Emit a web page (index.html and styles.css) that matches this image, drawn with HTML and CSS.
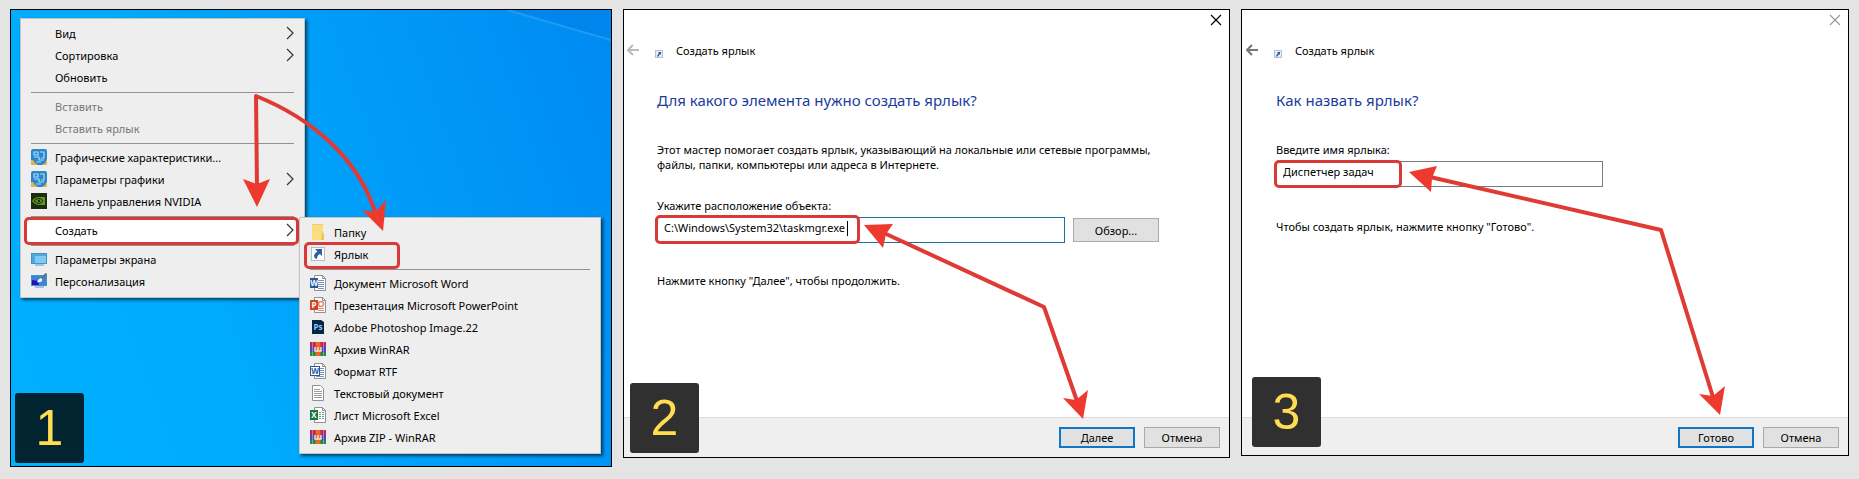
FILE: index.html
```html
<!DOCTYPE html>
<html lang="ru">

<head>
    <meta charset="UTF-8">
    <meta name="viewport" content="width=device-width, initial-scale=1.0">
    <title>Создать ярлык</title>
    <link rel="stylesheet" href="styles.css">
</head>

<body>
    <!-- Shared icons -->
    <svg class="sprite" aria-hidden="true">
        <symbol id="i-intel" viewBox="0 0 16 16">
            <rect width="16" height="16" rx="2" fill="#2a86c8"/>
            <path d="M0 11v3q0 2 2 2h5l-3-2-2-3zM16 10v4q0 2-2 2h-3l3-2z" fill="#e3b64a"/>
            <path d="M3 3h4v3H3zM9 3h4v6h-3M3 8h5v3h5M5 13h5" fill="none" stroke="#a9dcf7" stroke-width="1.2"/>
        </symbol>
        <symbol id="i-nvidia" viewBox="0 0 16 16">
            <rect width="16" height="16" fill="#1d2a14"/>
            <path d="M1 8q3-4 7-4h6v8H8q-4 0-7-4z" fill="#5f9a14"/>
            <path d="M3 8q2-2.500 5-2.500T12 8q-1.500 2.500-4 2.500T3 8z" fill="none" stroke="#1d2a14"/>
            <circle cx="8" cy="8" r="1.300" fill="#1d2a14"/>
        </symbol>
        <symbol id="i-screen" viewBox="0 0 16 16">
            <rect x=".5" y="2.500" width="15" height="10" fill="#7fcbf5" stroke="#4a8fc6"/>
            <path d="M1 3h14v2H4v7H1z" fill="#4fa6e0"/>
            <path d="M4 14h9" stroke="#8ab4d4" stroke-width="1.500"/>
        </symbol>
        <symbol id="i-personal" viewBox="0 0 16 16">
            <rect x=".5" y="2.500" width="15" height="10" fill="#3d84d8" stroke="#4a8fc6"/>
            <path d="M1 7l6 1 1 4H1z" fill="#2414b8"/>
            <path d="M15.500.5L10 6" stroke="#5b7382" stroke-width="2"/>
            <path d="M10 5q2 1 1 3-2 2-5 1 1-3 4-4z" fill="#f1f5fa"/>
            <path d="M4 14h9" stroke="#8ab4d4" stroke-width="1.500"/>
        </symbol>
        <symbol id="i-folder" viewBox="0 0 16 16">
            <path d="M2 0h11v16H2z" fill="#f9dd7f"/>
            <path d="M12 7l2 3v6h-3z" fill="#eac65a"/>
            <path d="M2 .5h11" stroke="#edcf73"/>
        </symbol>
        <symbol id="i-shortcut" viewBox="0 0 16 16">
            <rect x="1.500" y="1.500" width="13" height="13" fill="#fff" stroke="#b5bcc5"/>
            <path d="M5 3h7v7l-2-2q-3 1-3 5Q4 12 4 9.500 5 6.500 7.500 5.500z" fill="#2b5f9e"/>
        </symbol>
        <symbol id="i-page" viewBox="0 0 16 16">
            <path d="M4.500.5h8l3 3v12h-11z" fill="#fff" stroke="#8f9194"/>
            <path d="M12.500.5v3h3" fill="none" stroke="#8f9194"/>
        </symbol>
        <symbol id="i-word" viewBox="0 0 16 16">
            <use href="#i-page"/>
            <path d="M8 5.500h6M8 7.500h6M8 9.500h6M8 11.500h6M8 13.500h6" stroke="#6f93c2"/>
            <rect y="3" width="8" height="10" fill="#2b579a"/>
            <text x="4" y="11" class="glyph" fill="#fff">W</text>
        </symbol>
        <symbol id="i-ppt" viewBox="0 0 16 16">
            <use href="#i-page"/>
            <circle cx="11" cy="7" r="2.500" fill="none" stroke="#e08a72" stroke-width="1.500"/>
            <path d="M8 11.500h6M8 13.500h6" stroke="#e08a72"/>
            <rect y="3" width="8" height="10" fill="#d04525"/>
            <text x="4" y="11" class="glyph" fill="#fff">P</text>
        </symbol>
        <symbol id="i-ps" viewBox="0 0 16 16">
            <path d="M2 1h9l3 2v12H2z" fill="#06264a"/>
            <text x="8" y="11" class="glyph" fill="#8ccdf8">Ps</text>
        </symbol>
        <symbol id="i-rar" viewBox="0 0 16 16">
            <rect y="1" width="16" height="5" fill="#b8265e"/>
            <rect y="6" width="16" height="5" fill="#4a49b5"/>
            <rect y="11" width="16" height="4" fill="#1f8a45"/>
            <path d="M5.500 1h5v14h-5z" fill="#e9662c"/>
            <path d="M5 6v4h6V6M8 6v3" fill="none" stroke="#f5ecd9" stroke-width="1.400"/>
            <path d="M2.500 1v14M13.500 1v14" stroke="#fff" stroke-opacity=".35"/>
        </symbol>
        <symbol id="i-rtf" viewBox="0 0 16 16">
            <use href="#i-page"/>
            <path d="M10 5.500h4M10 7.500h4M10 9.500h4M10 11.500h4M6 13.500h8" stroke="#6f93c2"/>
            <rect x=".5" y="3.500" width="9" height="9" fill="#fff" stroke="#2b579a"/>
            <text x="5" y="11" class="glyph" fill="#2b579a">W</text>
        </symbol>
        <symbol id="i-text" viewBox="0 0 16 16">
            <path d="M2.500.5h8l3 3v12h-11z" fill="#fff" stroke="#8f9194"/>
            <path d="M4 4.500h6M4 6.500h8M4 8.500h8M4 10.500h8M4 12.500h8" stroke="#9b9da0"/>
        </symbol>
        <symbol id="i-excel" viewBox="0 0 16 16">
            <use href="#i-page"/>
            <path d="M9 5.500h2M12 5.500h2M9 7.500h2M12 7.500h2M9 9.500h2M12 9.500h2M9 11.500h2M12 11.500h2" stroke="#5ba37c"/>
            <rect y="3" width="8" height="10" fill="#1e7145"/>
            <text x="4" y="11" class="glyph" fill="#fff">X</text>
        </symbol>
        <symbol id="i-chevron" viewBox="0 0 8 14">
            <path d="M1 1l6 6-6 6" fill="none" stroke="#333" stroke-width="1.200"/>
        </symbol>
        <symbol id="i-back" viewBox="0 0 12 12">
            <path d="M12 6H1M6 1L1 6l5 5" fill="none" stroke="currentColor" stroke-width="2"/>
        </symbol>
        <symbol id="i-close" viewBox="0 0 12 12">
            <path d="M1 1l10 10M11 1L1 11" fill="none" stroke="currentColor" stroke-width="1.200"/>
        </symbol>
        <symbol id="i-link" viewBox="0 0 8 8">
            <rect x=".5" y=".5" width="7" height="7" fill="#e6edf6" stroke="#b4c1d4"/>
            <path d="M3 2h3v3L5 4 3 7 2 6l2-3z" fill="#2f5596"/>
        </symbol>
    </svg>

    <main class="steps">
        <!-- Step 1: desktop with context menus -->
        <section class="panel desktop">
            <svg class="ray" viewBox="0 0 110 32" aria-hidden="true">
                <path d="M6 0l104 31V0z" fill="#0078e4" fill-opacity=".35"/>
                <path d="M6 0l104 30" stroke="#3fb0fa" stroke-opacity=".5" stroke-width="2"/>
            </svg>
            <ul class="menu">
                <li><button class="item">Вид<svg class="chevron"><use href="#i-chevron"/></svg></button></li>
                <li><button class="item">Сортировка<svg class="chevron"><use href="#i-chevron"/></svg></button></li>
                <li><button class="item">Обновить</button></li>
                <li class="separator"></li>
                <li><button class="item" disabled>Вставить</button></li>
                <li><button class="item" disabled>Вставить ярлык</button></li>
                <li class="separator"></li>
                <li><button class="item"><svg class="icon"><use href="#i-intel"/></svg>Графические характеристики...</button></li>
                <li><button class="item"><svg class="icon"><use href="#i-intel"/></svg>Параметры графики<svg class="chevron"><use href="#i-chevron"/></svg></button></li>
                <li><button class="item"><svg class="icon"><use href="#i-nvidia"/></svg>Панель управления NVIDIA</button></li>
                <li class="separator"></li>
                <li><button class="item marked">Создать<svg class="chevron"><use href="#i-chevron"/></svg></button></li>
                <li class="separator"></li>
                <li><button class="item"><svg class="icon"><use href="#i-screen"/></svg>Параметры экрана</button></li>
                <li><button class="item"><svg class="icon"><use href="#i-personal"/></svg>Персонализация</button></li>
            </ul>

            <ul class="menu submenu">
                <li><button class="item"><svg class="icon"><use href="#i-folder"/></svg>Папку</button></li>
                <li><button class="item marked-short"><svg class="icon"><use href="#i-shortcut"/></svg>Ярлык</button></li>
                <li class="separator"></li>
                <li><button class="item"><svg class="icon"><use href="#i-word"/></svg>Документ Microsoft Word</button></li>
                <li><button class="item"><svg class="icon"><use href="#i-ppt"/></svg>Презентация Microsoft PowerPoint</button></li>
                <li><button class="item"><svg class="icon"><use href="#i-ps"/></svg>Adobe Photoshop Image.22</button></li>
                <li><button class="item"><svg class="icon"><use href="#i-rar"/></svg>Архив WinRAR</button></li>
                <li><button class="item"><svg class="icon"><use href="#i-rtf"/></svg>Формат RTF</button></li>
                <li><button class="item"><svg class="icon"><use href="#i-text"/></svg>Текстовый документ</button></li>
                <li><button class="item"><svg class="icon"><use href="#i-excel"/></svg>Лист Microsoft Excel</button></li>
                <li><button class="item"><svg class="icon"><use href="#i-rar"/></svg>Архив ZIP - WinRAR</button></li>
            </ul>

            <svg class="arrows" aria-hidden="true">
                <path class="shaft" d="M246 178L245 86C300 108 347 148 364 202"/>
                <path class="head" d="M232 169l14 5 13-5-13 28zM351 200l13 2 11-12-3 31z"/>
            </svg>
            <div class="badge">1</div>
        </section>

        <!-- Step 2: location of the object -->
        <section class="panel wizard">
            <div class="titlebar">
                <button class="close" aria-label="Закрыть"><svg><use href="#i-close"/></svg></button>
            </div>
            <header class="wizard-header">
                <button class="back" aria-label="Назад" disabled><svg><use href="#i-back"/></svg></button>
                <svg class="link-icon"><use href="#i-link"/></svg>
                <span>Создать ярлык</span>
            </header>
            <div class="wizard-body">
                <h1>Для какого элемента нужно создать ярлык?</h1>
                <p class="intro">Этот мастер помогает создать ярлык, указывающий на локальные или сетевые программы,<br>файлы, папки, компьютеры или адреса в Интернете.</p>
                <label for="location">Укажите расположение объекта:</label>
                <div class="field-row">
                    <div class="field frame-wide">
                        <input type="text" id="location" class="active" value="C:\Windows\System32\taskmgr.exe">
                    </div>
                    <button class="btn browse">Обзор...</button>
                </div>
                <p class="hint">Нажмите кнопку "Далее", чтобы продолжить.</p>
            </div>
            <footer class="wizard-footer">
                <button class="btn primary">Далее</button>
                <button class="btn">Отмена</button>
            </footer>
            <svg class="arrows" aria-hidden="true">
                <path class="shaft" d="M260 223l160 74 33 94"/>
                <path class="head" d="M240 215l29-1-7 10-3 14zM439 388l13 2 12-10-5 29z"/>
            </svg>
            <div class="badge">2</div>
        </section>

        <!-- Step 3: name of the shortcut -->
        <section class="panel wizard last">
            <div class="titlebar">
                <button class="close" aria-label="Закрыть"><svg><use href="#i-close"/></svg></button>
            </div>
            <header class="wizard-header">
                <button class="back" aria-label="Назад"><svg><use href="#i-back"/></svg></button>
                <svg class="link-icon"><use href="#i-link"/></svg>
                <span>Создать ярлык</span>
            </header>
            <div class="wizard-body">
                <h1>Как назвать ярлык?</h1>
                <label for="name">Введите имя ярлыка:</label>
                <div class="field-row">
                    <div class="field frame-narrow">
                        <input type="text" id="name" value="Диспетчер задач">
                    </div>
                </div>
                <p class="hint">Чтобы создать ярлык, нажмите кнопку "Готово".</p>
            </div>
            <footer class="wizard-footer">
                <button class="btn primary">Готово</button>
                <button class="btn">Отмена</button>
            </footer>
            <svg class="arrows" aria-hidden="true">
                <path class="shaft" d="M188 167l231 53 52 167"/>
                <path class="head" d="M167 162l28-6-5 12-1 14zM457 384l14 2 12-10-5 29z"/>
            </svg>
            <div class="badge">3</div>
        </section>
    </main>
</body>

</html>
```

FILE: styles.css
```css
/* Reset */
*,
*::before,
*::after {
    margin: 0;
    padding: 0;
    box-sizing: border-box;
}

body {
    background: #e4e4e4;
    font-family: "Noto Sans", "Open Sans", sans-serif;
    font-size: 11px;
    line-height: 15px;
    color: #000;
}

button,
input {
    font: inherit;
    color: inherit;
}

.sprite {
    display: none;
}

.glyph {
    font: bold 8px "Open Sans", sans-serif;
    text-anchor: middle;
}

/* Three panels in a row */
.steps {
    display: grid;
    grid-template-columns: minmax(0, 602fr) minmax(0, 607fr) minmax(0, 608fr);
    gap: 11px;
    align-items: start;
    padding: 9px 10px;
}

.panel {
    position: relative;
    border: 1px solid #000;
}

/* Desktop */
.desktop {
    min-height: 458px;
    padding: 8px 9px;
    background: linear-gradient(70deg, #00b0ff 0%, #00aafd 35%, #0098f7 70%, #008af1 100%);
}

.ray {
    position: absolute;
    top: 0;
    right: 0;
    width: 110px;
    height: 32px;
}

/* Context menu */
.menu {
    width: 285px;
    padding: 4px 10px;
    background: #eee;
    border: 1px solid #c4c4c4;
    box-shadow: 2px 2px 3px rgba(0, 0, 0, 0.6);
    list-style: none;
}

.submenu {
    position: absolute;
    top: 207px;
    left: 288px;
    width: 302px;
}

.item {
    position: relative;
    display: flex;
    align-items: center;
    width: 100%;
    height: 22px;
    padding: 0 0 2px 24px;
    background: none;
    border: 0;
    text-align: left;
}

.item:disabled {
    color: #777;
}

.icon {
    width: 16px;
    height: 16px;
    margin-left: -24px;
    margin-right: 8px;
}

.chevron {
    width: 8px;
    height: 14px;
    margin-left: auto;
}

.separator {
    height: 7px;
    padding-top: 3px;
}

.separator::before {
    content: "";
    display: block;
    height: 1px;
    background: #919191;
}

/* Red frames */
.marked::before,
.marked-short::before,
.frame-wide::after,
.frame-narrow::after {
    content: "";
    position: absolute;
    border: 3px solid #d93a37;
    border-radius: 5px;
}

.marked {
    z-index: 0;
}

.marked::before {
    z-index: -1;
    inset: -3px -5px -3px -7px;
    background: #fff;
}

.marked-short::before {
    top: -2px;
    left: -6px;
    width: 96px;
    height: 27px;
}

.frame-wide::after {
    top: -2px;
    left: -2px;
    width: 205px;
    height: 29px;
}

.frame-narrow::after {
    top: -1px;
    left: -2px;
    width: 128px;
    height: 28px;
}

/* Text cursor */
.frame-wide::before {
    content: "";
    position: absolute;
    top: 4px;
    left: 190px;
    width: 1px;
    height: 15px;
    background: #000;
}

/* Wizard window */
.wizard {
    display: flex;
    flex-direction: column;
    min-height: 449px;
    background: #fff;
}

.last {
    min-height: 447px;
}

.titlebar {
    display: flex;
    justify-content: flex-end;
    padding: 4px 7px 0;
    height: 31px;
}

.close,
.back {
    display: block;
    width: 12px;
    height: 12px;
    background: none;
    border: 0;
}

.close svg,
.back svg {
    display: block;
    width: 12px;
    height: 12px;
}

.last .close {
    color: #999;
}

.wizard-header {
    display: flex;
    align-items: center;
    height: 20px;
    padding: 0 0 2px 3px;
}

.last .wizard-header {
    padding-left: 4px;
}

.back {
    color: #777;
}

.back:disabled {
    color: #bbb;
}

.link-icon {
    width: 8px;
    height: 8px;
    margin: 8px 13px 0 16px;
}

.wizard-body {
    flex: 1;
    padding: 29px 50px 0 33px;
}

.last .wizard-body {
    padding-left: 34px;
}

h1 {
    margin-bottom: 32px;
    font-size: 15px;
    font-weight: normal;
    line-height: 20px;
    color: #1a3d9c;
}

.intro {
    margin-bottom: 26px;
    white-space: nowrap;
}

label {
    display: block;
    margin-bottom: 4px;
}

.field-row {
    display: flex;
    align-items: center;
    gap: 8px;
    max-width: 502px;
    margin-bottom: 30px;
}

.last .field-row {
    max-width: 327px;
    margin-bottom: 32px;
}

.field {
    position: relative;
    flex: 1;
}

.field input {
    display: block;
    width: 100%;
    height: 26px;
    padding: 0 6px 6px;
    background: #fff;
    border: 1px solid #7a7a7a;
    outline: none;
}

.field .active {
    border-color: #1d6fa5;
}

.wizard-footer {
    display: flex;
    justify-content: flex-end;
    gap: 9px;
    height: 40px;
    padding: 9px 9px 0;
    background: #efefef;
    border-top: 1px solid #dcdcdc;
}

.last .wizard-footer {
    height: 38px;
}

.btn {
    width: 76px;
    height: 21px;
    background: #e1e1e1;
    border: 1px solid #a9a9a9;
    line-height: 17px;
}

.browse {
    width: 86px;
    height: 24px;
}

.primary {
    border: 2px solid #0f76c8;
}

/* Arrows drawn over the panels */
.arrows {
    position: absolute;
    top: 0;
    left: 0;
    width: 100%;
    height: 100%;
    pointer-events: none;
}

.shaft {
    fill: none;
    stroke: #e03a35;
    stroke-width: 4;
    stroke-linejoin: round;
}

.head {
    fill: #ee3a2e;
}

/* Step number */
.badge {
    position: absolute;
    left: 4px;
    bottom: 3px;
    width: 69px;
    height: 70px;
    background: #012430;
    border-radius: 3px;
    color: #ffdc50;
    font-family: "Liberation Sans", Arial, sans-serif;
    font-size: 50px;
    line-height: 70px;
    text-align: center;
}

.wizard .badge {
    left: 6px;
    bottom: 4px;
    background: #303030;
}

.last .badge {
    left: 10px;
    bottom: 8px;
}
```
